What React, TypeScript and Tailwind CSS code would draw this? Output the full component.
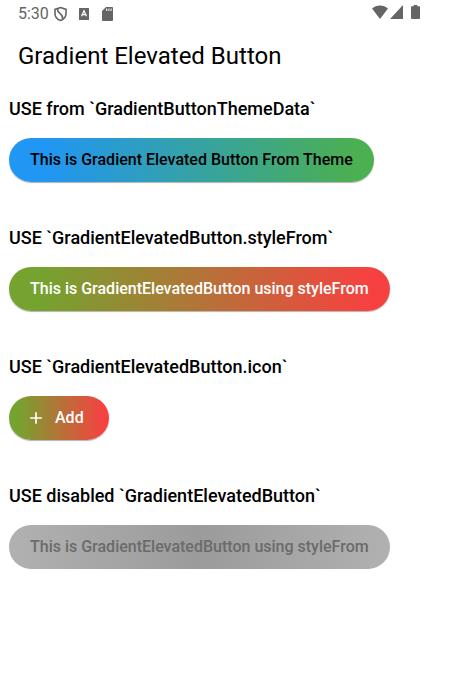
import type { ReactNode } from 'react';

function StatusBar() {
  return (
    <div className="flex h-7 items-center justify-between pr-[30px] pl-[18px] text-[#656565]">
      <div className="flex items-center">
        <span className="w-9 text-base leading-6">5:30</span>
        <svg className="h-4 w-[13px]" viewBox="0 0 13 16" fill="none" stroke="currentColor" strokeWidth="1.6" aria-hidden="true">
          <path d="M6.500 1.500 12 3.400V7.800c0 3.200-2.300 5.500-5.500 6.700C3.300 13.300 1 11 1 7.800V3.400L6.500 1.500Z" />
          <path d="M3.600 3C3 8 9.800 7.500 8.600 13" />
        </svg>
        <svg className="ml-3 h-3 w-[10px]" viewBox="0 0 10 12" aria-hidden="true">
          <rect width="10" height="12" rx="0.6" fill="currentColor" />
          <path d="M2.500 8.300 5 2.700l2.500 5.600M3.400 6.700h3.200" fill="none" stroke="#fff" strokeWidth="1.200" />
        </svg>
        <svg className="ml-[13px] h-[14px] w-[11px]" viewBox="0 0 11 14" aria-hidden="true">
          <path d="M4 0h6a1 1 0 0 1 1 1v12a1 1 0 0 1-1 1H1a1 1 0 0 1-1-1V4Z" fill="currentColor" />
          <path d="M4.700 1.500v2.500M6.900 1.500v2.500M9.100 1.500v2.500" stroke="#fff" strokeWidth="1" />
        </svg>
      </div>
      <div className="flex items-center pb-1">
        <svg className="h-[14px] w-4" viewBox="0 0 16 14" fill="currentColor" aria-hidden="true">
          <path d="M0 3.500C4.500-.5 11.500-.5 16 3.500L8 14Z" />
        </svg>
        <svg className="ml-[2px] h-[14px] w-[13px]" viewBox="0 0 13 14" fill="currentColor" aria-hidden="true">
          <path d="M13 0v14H0Z" />
        </svg>
        <svg className="ml-2 h-[14px] w-[9px]" viewBox="0 0 9 14" fill="currentColor" aria-hidden="true">
          <path d="M2.700 0h3.600v1.300H8a1 1 0 0 1 1 1V13a1 1 0 0 1-1 1H1a1 1 0 0 1-1-1V2.300a1 1 0 0 1 1-1h1.700Z" />
        </svg>
      </div>
    </div>
  );
}

function Section({ title, children }: { title: string; children: ReactNode }) {
  return (
    <section className="flex flex-col items-start gap-[17px]">
      <h2 className="text-lg leading-6 font-medium">{title}</h2>
      {children}
    </section>
  );
}

const buttonBase = 'flex h-11 items-center rounded-full text-base font-medium';
const raised = 'shadow-[0_1px_1px_rgba(0,0,0,0.3)]';

export default function App() {
  return (
    <div className="min-h-screen bg-white font-[Roboto,sans-serif] text-black">
      <StatusBar />
      <header className="flex h-14 items-center px-[18px]">
        <h1 className="text-2xl">Gradient Elevated Button</h1>
      </header>
      <main className="flex flex-col gap-11 px-[9px] pt-[13px]">
        <Section title="USE from `GradientButtonThemeData`">
          <button type="button" className={`${buttonBase} ${raised} bg-linear-to-r/srgb from-[#2196f3] from-10% to-[#4caf50] to-95% px-[21px] text-black`}>
            This is Gradient Elevated Button From Theme
          </button>
        </Section>
        <Section title="USE `GradientElevatedButton.styleFrom`">
          <button type="button" className={`${buttonBase} ${raised} bg-linear-to-r/srgb from-[#74a32f] from-8% to-[#f74141] to-95% px-[21px] text-white`}>
            This is GradientElevatedButton using styleFrom
          </button>
        </Section>
        <Section title="USE `GradientElevatedButton.icon`">
          <button type="button" className={`${buttonBase} ${raised} gap-[9px] bg-linear-to-r/srgb from-[#74a32f] from-8% to-[#f74141] to-95% pr-[25px] pl-[17px] text-white`}>
            <svg className="h-5 w-5" viewBox="0 0 24 24" fill="currentColor" aria-hidden="true">
              <path d="M19 13h-6v6h-2v-6H5v-2h6V5h2v6h6Z" />
            </svg>
            Add
          </button>
        </Section>
        <Section title="USE disabled `GradientElevatedButton`">
          <button type="button" disabled className={`${buttonBase} bg-linear-to-r/srgb from-[#b1b1b1] via-[#9b9b9b] to-[#b1b1b1] px-[21px] text-[#6b6b6b]`}>
            This is GradientElevatedButton using styleFrom
          </button>
        </Section>
      </main>
    </div>
  );
}
